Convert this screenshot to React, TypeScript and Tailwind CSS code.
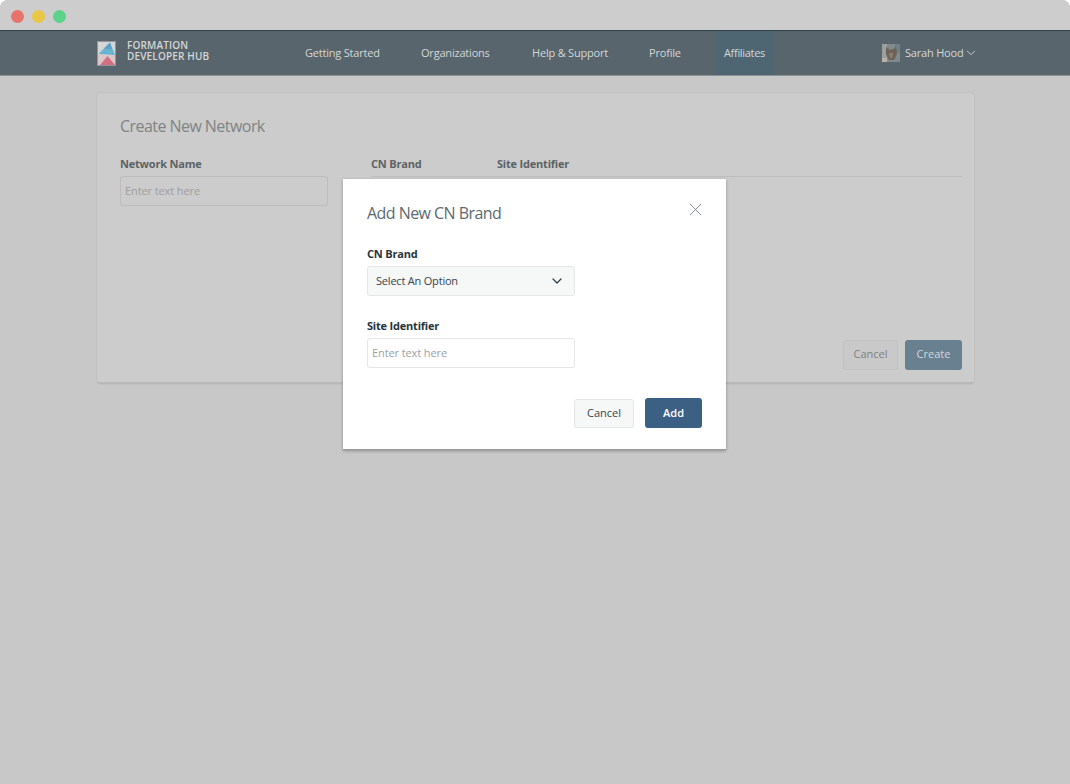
import { ChevronDown, X } from "lucide-react";

function Logo() {
  return (
    <svg width="19" height="25" viewBox="0 0 19 25" className="shrink-0">
      <rect x="0" y="0" width="19" height="25" fill="#8f9599" />
      <rect x="1" y="1" width="17" height="23" fill="#d6d4d4" />
      <rect x="1" y="14" width="17" height="10" fill="#dcc6c8" />
      <path d="M13 1.5 L1.5 13 L18 14 Z" fill="#66b3d3" />
      <path d="M13 1.5 L7 7.5 L15 8 Z" fill="#5aa0c4" />
      <path d="M10.5 15 L18 24 L3 24 Z" fill="#d36f82" />
    </svg>
  );
}

function Avatar() {
  return (
    <svg width="18" height="18" viewBox="0 0 18 18" className="shrink-0">
      <rect width="18" height="18" fill="#7f8a8c" />
      <rect x="0" y="0" width="5" height="18" fill="#9d9f9d" />
      <rect x="13" y="0" width="5" height="9" fill="#6f8088" />
      <path d="M4 3 L8 6 L12 5 L14 2 L15 10 L12 16 L7 16 L4 10 Z" fill="#6d6258" />
      <path d="M7 9 L11 9 L10 14 L8 14 Z" fill="#8f8172" />
      <rect x="0" y="14" width="5" height="4" fill="#b9b1a7" />
    </svg>
  );
}

const navItems = ["Getting Started", "Organizations", "Help & Support", "Profile"];

export default function App() {
  return (
    <div className="relative h-[784px] w-[1070px] overflow-hidden bg-white font-['Open_Sans','Noto_Sans',sans-serif]">
      <div className="flex h-full flex-col overflow-hidden rounded-t-[8px] bg-[#c8c8c8]">
        {/* title bar */}
        <div className="flex h-[30px] shrink-0 items-center gap-[8px] bg-[#cdcdcd] pl-[11px] pt-[3px]">
          <span className="h-[13px] w-[13px] rounded-full bg-[#e8736a]" />
          <span className="h-[13px] w-[13px] rounded-full bg-[#e9c744]" />
          <span className="h-[13px] w-[13px] rounded-full bg-[#5bd38a]" />
        </div>

        {/* nav */}
        <div className="flex h-[46px] shrink-0 items-stretch border-y border-t-[#2f424c] border-b-[#8b9397] bg-[#58656c] pl-[97px]">
          <div className="flex w-[208px] items-center gap-[11px]">
            <Logo />
            <div className="-mt-[4px] whitespace-nowrap text-[10px] leading-[11px] font-semibold tracking-[0.15px] text-[#d6d6d6]">
              <div>FORMATION</div>
              <div>DEVELOPER HUB</div>
            </div>
          </div>
          <div className="flex items-stretch text-[11px] tracking-[-0.2px] text-[#d4d6d7]">
            {navItems.map((item, i) => (
              <div
                key={item}
                className={
                  i === 0
                    ? "flex w-[75px] items-center whitespace-nowrap"
                    : i === 1
                      ? "ml-[41px] flex w-[70px] items-center whitespace-nowrap"
                      : i === 2
                        ? "ml-[41px] flex w-[75px] items-center whitespace-nowrap"
                        : "ml-[42px] flex w-[32px] items-center whitespace-nowrap"
                }
              >
                {item}
              </div>
            ))}
            <div className="ml-[35px] flex w-[57px] items-center justify-center bg-[#4d6672] tracking-[-0.3px]">Affiliates</div>
          </div>
          <div className="ml-[109px] flex items-center gap-[5px] text-[11px] tracking-[-0.2px] text-[#d4d6d7]">
            <Avatar />
            <span className="whitespace-nowrap">Sarah Hood</span>
            <ChevronDown size={14} strokeWidth={1.5} className="-ml-[4px]" />
          </div>
        </div>

        {/* card */}
        <div className="ml-[97px] mt-[17px] flex h-[291px] w-[877px] flex-col rounded-[3px] border-b-2 border-b-[#b8b8b8] bg-[#cccccc] pl-[23px] pr-[12px] pt-[22px] shadow-[0_0_2px_rgba(0,0,0,0.12)]">
          <h1 className="text-[16px] leading-[22px] tracking-[-0.55px] text-[#7f8485]">Create New Network</h1>
          <div className="mt-[19px] flex">
            <div className="w-[251px] shrink-0">
              <div className="text-[11px] leading-[16px] font-bold tracking-[-0.2px] text-[#5c6366]">Network Name</div>
              <div className="mt-[4px] flex h-[30px] w-[208px] items-center rounded-[3px] border border-[#bdbdbd] pl-[4px] text-[11px] tracking-[-0.1px] text-[#9d9f9f]">
                Enter text here
              </div>
            </div>
            <div className="flex h-[21px] flex-1 border-b border-[#bdbfbf] text-[11px] leading-[16px] font-bold tracking-[-0.2px] text-[#5c6366]">
              <div className="w-[126px]">CN Brand</div>
              <div>Site Identifier</div>
            </div>
          </div>
          <div className="mt-[134px] flex justify-end gap-[7px] text-[11px]">
            <div className="flex h-[30px] w-[55px] items-center justify-center rounded-[3px] border border-[#c2c2c2] bg-[#c9c9c9] pb-[1px] text-[#7d8182]">
              Cancel
            </div>
            <div className="flex h-[30px] w-[57px] items-center justify-center rounded-[3px] bg-[#68808f] pb-[1px] text-[#d5d8da]">
              Create
            </div>
          </div>
        </div>
      </div>

      {/* modal */}
      <div className="absolute left-[343px] top-[179px] flex h-[271px] w-[383px] flex-col border-b border-b-[#9a9a9a] bg-white pl-[24px] pr-[24px] pt-[22px] shadow-[0_1px_3px_rgba(0,0,0,0.3)]">
        <div className="flex items-start justify-between">
          <h2 className="text-[16px] leading-[24px] tracking-[-0.55px] text-[#5d6a70]">Add New CN Brand</h2>
          <X size={21} strokeWidth={0.9} className="-mr-[4px] -mt-[2px] text-[#6b757a]" />
        </div>
        <label className="mt-[21px] text-[11px] leading-[16px] font-bold tracking-[-0.2px] text-[#26343d]">CN Brand</label>
        <div className="mt-[4px] flex h-[30px] w-[208px] items-center justify-between rounded-[3px] border border-[#e4e6e7] bg-[#f6f7f7] pl-[8px] pr-[9px] text-[11px] tracking-[-0.2px] text-[#39444b]">
          <span>Select An Option</span>
          <ChevronDown size={16} strokeWidth={1.8} className="text-[#2f3a40]" />
        </div>
        <label className="mt-[22px] text-[11px] leading-[16px] font-bold tracking-[-0.2px] text-[#26343d]">Site Identifier</label>
        <div className="mt-[4px] flex h-[30px] w-[208px] items-center rounded-[3px] border border-[#e4e6e7] pl-[4px] text-[11px] tracking-[-0.1px] text-[#9aa3a8]">
          Enter text here
        </div>
        <div className="mt-[30px] flex items-end justify-end gap-[11px] text-[11px]">
          <div className="flex h-[29px] w-[60px] items-center justify-center rounded-[3px] border border-[#e4e6e7] bg-[#f6f7f7] text-[#39444b]">
            Cancel
          </div>
          <div className="flex h-[30px] w-[57px] items-center justify-center rounded-[3px] bg-[#3b6084] font-semibold text-white">
            Add
          </div>
        </div>
      </div>
    </div>
  );
}
